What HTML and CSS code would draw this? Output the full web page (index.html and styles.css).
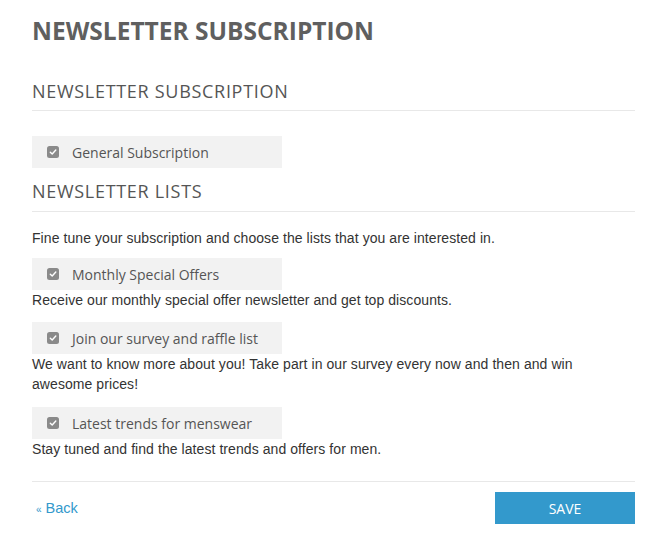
FILE: index.html
```html
<!DOCTYPE html>
<html>
<head>
<meta charset="utf-8">
<link rel="stylesheet" href="styles.css">
</head>
<body>
<div class="page">
  <h1 class="title">NEWSLETTER SUBSCRIPTION</h1>
  <h2 class="section first">NEWSLETTER SUBSCRIPTION</h2>
  <label class="check general"><span class="box"><svg viewBox="0 0 12 12" width="12" height="12"><rect x="0" y="0" width="12" height="12" rx="2.5" fill="#8a8a8a"/><path d="M3.3 6.2 L5.2 8 L8.8 4" fill="none" stroke="#fff" stroke-width="1.4" stroke-linecap="round" stroke-linejoin="round"/></svg></span>General Subscription</label>
  <h2 class="section lists">NEWSLETTER LISTS</h2>
  <p class="intro">Fine tune your subscription and choose the lists that you are interested in.</p>
  <div class="item">
    <label class="check"><span class="box"><svg viewBox="0 0 12 12" width="12" height="12"><rect x="0" y="0" width="12" height="12" rx="2.5" fill="#8a8a8a"/><path d="M3.3 6.2 L5.2 8 L8.8 4" fill="none" stroke="#fff" stroke-width="1.4" stroke-linecap="round" stroke-linejoin="round"/></svg></span>Monthly Special Offers</label>
    <p class="desc">Receive our monthly special offer newsletter and get top discounts.</p>
  </div>
  <div class="item tall">
    <label class="check"><span class="box"><svg viewBox="0 0 12 12" width="12" height="12"><rect x="0" y="0" width="12" height="12" rx="2.5" fill="#8a8a8a"/><path d="M3.3 6.2 L5.2 8 L8.8 4" fill="none" stroke="#fff" stroke-width="1.4" stroke-linecap="round" stroke-linejoin="round"/></svg></span>Join our survey and raffle list</label>
    <p class="desc">We want to know more about you! Take part in our survey every now and then and win awesome prices!</p>
  </div>
  <div class="item last">
    <label class="check"><span class="box"><svg viewBox="0 0 12 12" width="12" height="12"><rect x="0" y="0" width="12" height="12" rx="2.5" fill="#8a8a8a"/><path d="M3.3 6.2 L5.2 8 L8.8 4" fill="none" stroke="#fff" stroke-width="1.4" stroke-linecap="round" stroke-linejoin="round"/></svg></span>Latest trends for menswear</label>
    <p class="desc">Stay tuned and find the latest trends and offers for men.</p>
  </div>
  <div class="actions">
    <a class="back" href="#"><span class="raquo">«</span> Back</a>
    <button class="save">SAVE</button>
  </div>
</div>
</body>
</html>
```

FILE: styles.css
```css
html, body {
  margin: 0;
  padding: 0;
  background: #fff;
}
.page {
  width: 603px;
  padding: 0 21px 0 32px;
  font-family: "Liberation Sans", Arial, sans-serif;
  color: #333;
}
.title {
  margin: 0;
  padding-top: 16px;
  font-family: "Open Sans", sans-serif;
  font-weight: 700;
  font-size: 24.5px;
  line-height: 30px;
  color: #5f5f5f;
}
.section {
  margin: 0;
  font-family: "Open Sans", sans-serif;
  font-weight: 400;
  font-size: 18px;
  letter-spacing: 0.7px;
  line-height: 24px;
  color: #555;
  padding: 0 0 7px;
  border-bottom: 1px solid #e8e8e8;
}
.section.first {
  margin-top: 33px;
}
.section.lists {
  margin-top: 11px;
  padding-bottom: 8px;
}
.check {
  display: flex;
  align-items: center;
  width: 250px;
  height: 32px;
  background: #f2f2f2;
  font-family: "Open Sans", sans-serif;
  font-size: 14px;
  color: #555;
  box-sizing: border-box;
  padding-left: 15px;
}
.check.general {
  margin-top: 25px;
}
.box {
  display: flex;
  width: 12px;
  height: 12px;
  margin-right: 13px;
}
.intro {
  margin: 16px 0 10px;
  font-size: 14px;
  letter-spacing: 0.07px;
  line-height: 20px;
}
.item {
  margin-bottom: 12px;
}
.item.tall {
  margin-bottom: 13px;
}
.item.last {
  margin-bottom: 0;
}
.desc {
  margin: 0;
  font-size: 14px;
  letter-spacing: 0.07px;
  line-height: 20px;
}
.actions {
  margin-top: 22px;
  border-top: 1px solid #e8e8e8;
  padding-top: 10px;
  display: flex;
  justify-content: space-between;
  align-items: center;
}
.back {
  color: #3399cc;
  text-decoration: none;
  font-size: 14.5px;
  padding-left: 4px;
}
.raquo {
  font-size: 10px;
}
.save {
  width: 140px;
  height: 32px;
  border: 0;
  background: #3399cc;
  color: #fff;
  font-family: "Open Sans", sans-serif;
  font-size: 14px;
  font-weight: 500;
}
```
